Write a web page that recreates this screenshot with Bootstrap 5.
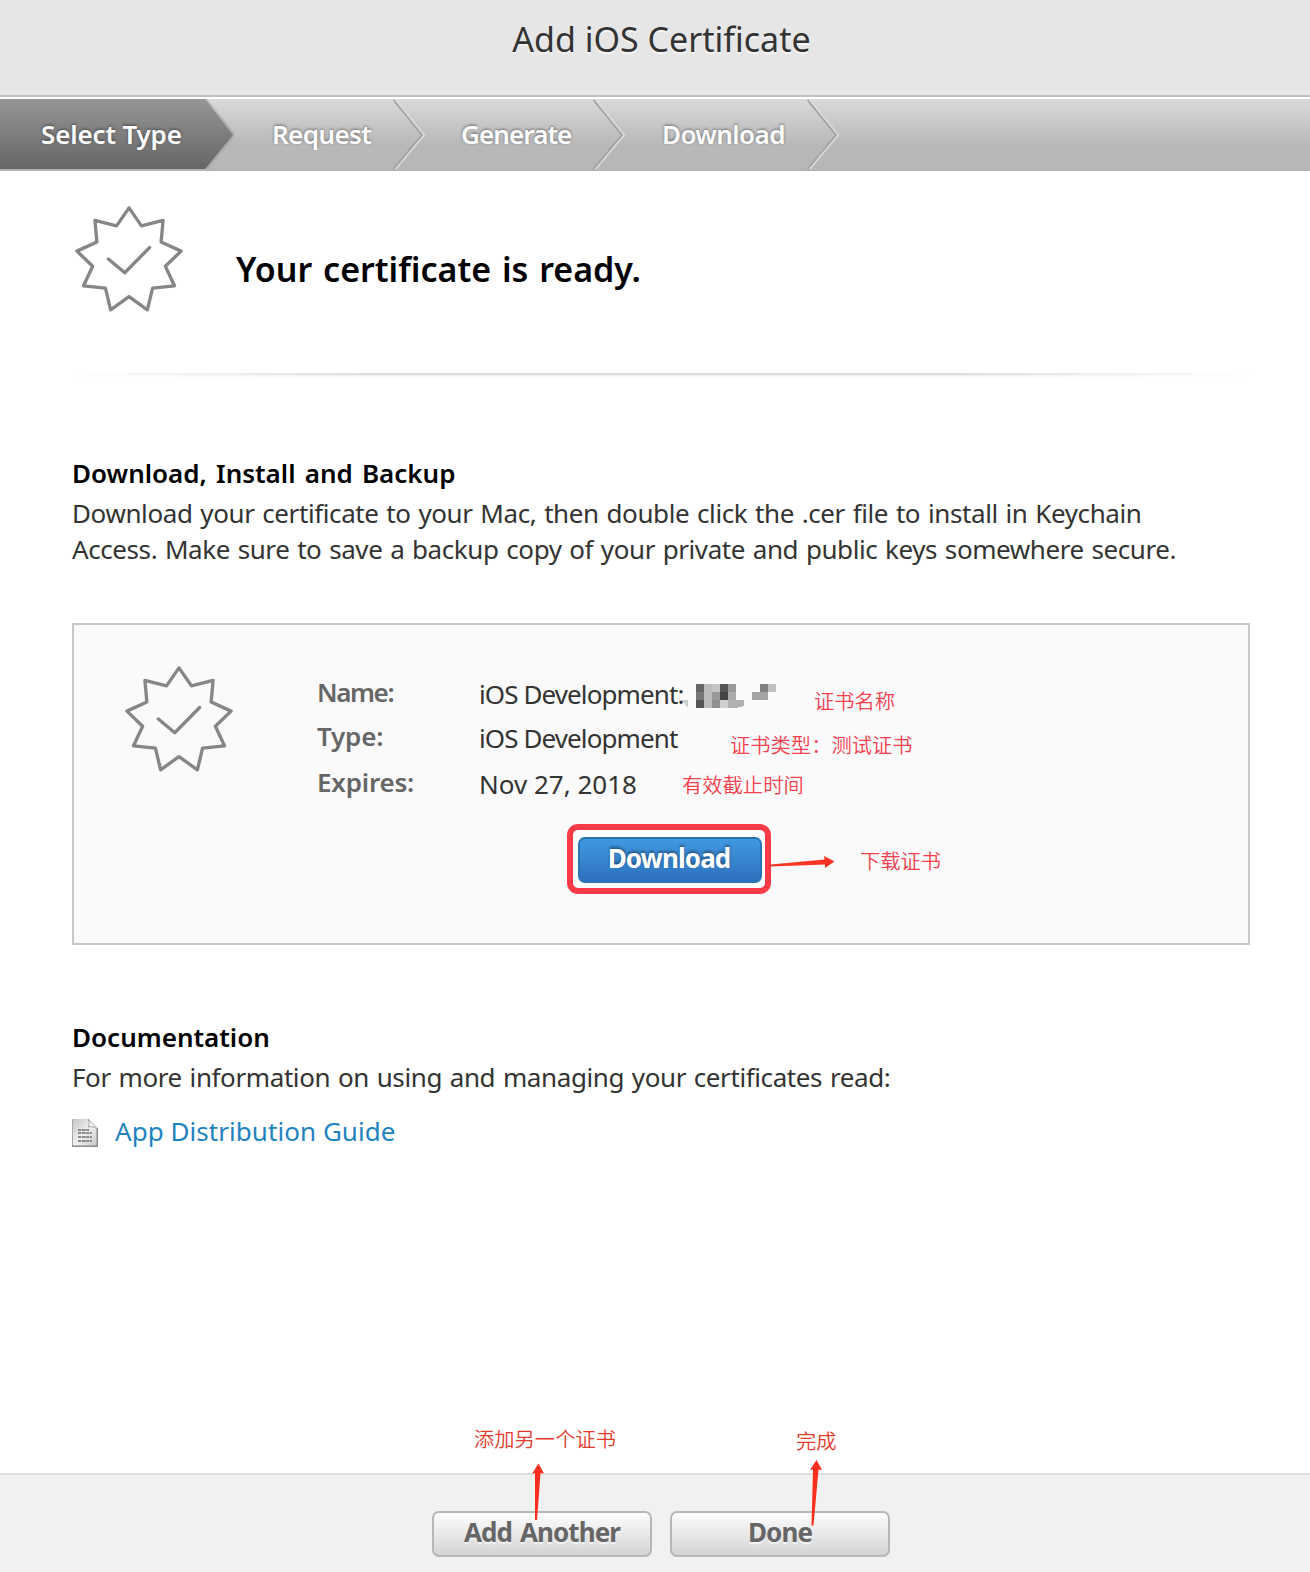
<!DOCTYPE html>
<html lang="en">
<head>
<meta charset="utf-8">
<meta name="viewport" content="width=device-width, initial-scale=1">
<title>Add iOS Certificate</title>
<link href="https://cdn.jsdelivr.net/npm/bootstrap@5.3.0/dist/css/bootstrap.min.css" rel="stylesheet">
<style>
body{font-family:"Noto Sans","Noto Sans CJK SC",sans-serif;font-size:26px;line-height:36px;color:#333;background:#fff;min-height:1572px}
.title-bar{height:97px;background:#e6e6e6;border-bottom:2px solid #c0c0c0;padding-top:15px}
.title-bar h1{font-size:34px;line-height:48px;font-weight:400;color:#333;text-shadow:0 2px 0 #f4f4f4;padding-left:13px}
.step-bar{height:72px;margin-top:2px;background:linear-gradient(#dadada,#b8b8b8 65%,#b7b7b7);color:#fff;font-weight:600;line-height:70px;white-space:nowrap;text-shadow:0 -1px 3px rgba(0,0,0,.45);border-bottom:2px solid #b3b3b3}
.step-item{height:70px;letter-spacing:-.6px}
.step-on{width:205px;padding-left:41px;letter-spacing:-.15px;background:linear-gradient(#969696,#666)}
.step-2{width:159px;padding-left:38px}
.step-3{width:168px;padding-left:36px;letter-spacing:-.9px}
.step-4{width:182px;padding-left:37px}
.ready{height:202px;padding:32px 0 0 1px}
.ready h2{font-size:34px;line-height:48px;font-weight:600;color:#000;margin:42px 0 0 51px;word-spacing:2px}
.seal-icon{width:112px;height:112px;flex:none}
.wrap-main{padding:0 60px 0 72px}
.fade-rule{height:6px;background:linear-gradient(90deg,#fff,transparent 25%,transparent 75%,#fff),linear-gradient(#d9d9d9,#e4e4e4 33%,#f6f6f6 50%,#fff)}
.sec-intro{padding-top:76px}
.sec-docs{padding-top:74px}
.sec-head{font-size:26px;line-height:36px;font-weight:600;color:#000;margin-bottom:4px;word-spacing:2.4px}
.body-text{letter-spacing:-.4px;word-spacing:1.4px;margin:0;white-space:nowrap}
.line-tight{letter-spacing:-.42px}
.cert-panel{height:322px;border:2px solid #c8c8c8;background:#fafafa;margin-top:56px;padding:42px 0 0 51px}
.cert-row{height:157px}
.cert-row .seal-icon{margin:-4px 0 0 -2px}
.facts{grid-template-columns:162px 1fr;grid-template-rows:44px 46px 44px;margin-left:82px;padding-top:7px}
.facts dt{font-weight:600;color:#666;letter-spacing:-.2px}
.facts dt:first-child{letter-spacing:-1.4px}
.facts dd{margin:0;padding-top:2px;white-space:nowrap}
.fact-tight{letter-spacing:-.9px}
.note-cn{font-family:"Noto Sans CJK SC",sans-serif;font-weight:350;font-size:20.3px;line-height:28px;color:#f3404e}
.note-dark{color:#e33b2c}
.btn-frame{width:204px;height:70px;border:6px solid #fb3a48;border-radius:11px;padding:7px 3px 5px 5px;background:#fbfdff}
.btn-blue,.btn-blue:hover{height:46px;border:2px solid #2b74b5;border-top-color:#2474a8;border-radius:7px;background:linear-gradient(#4199e1,#2c70bd);color:#fff;font-size:26px;font-weight:700;line-height:38px;padding:0 2px 4px 0;letter-spacing:-.9px;text-shadow:0 -2px 3px rgba(0,0,0,.4)}
.guide-link{color:#1f83c0;letter-spacing:.05px;margin-left:15px}
.foot-bar{height:99px;background:#f1f1f1;border-top:2px solid #e1e1e1;padding:36px 0 0 11px;gap:18px}
.btn-grey,.btn-grey:hover{width:220px;height:46px;border:2px solid #b7b7b7;border-radius:7px;background:linear-gradient(#fdfdfd,#d4d4d4);color:#666;font-size:26px;font-weight:700;line-height:38px;padding:0 0 4px 1px;letter-spacing:-.9px;word-spacing:2px;text-shadow:0 2px 1px #f4f4f4}
.foot-notes{left:0;top:-61px;width:1310px;height:125px;pointer-events:none}
</style>
</head>
<body class="d-flex flex-column">
<svg class="d-none">
  <symbol id="seal" viewBox="-1 -1 114 114">
    <path d="M56 4 68.7 22.3 90.7 16.7 88.7 38.7 109 48 93 63.3 102.3 83.3 80 85.7 74.7 107.7 56 94.3 37.3 107.7 32 85.7 9.7 83.3 19 63.3 3 48 23.3 38.7 21.3 16.7 43.3 22.3ZM35 56 51.7 70 77 44.3" fill="none" stroke="#868686" stroke-width="3.4" stroke-linejoin="round" stroke-linecap="round"/>
  </symbol>
  <symbol id="chev" viewBox="0 0 32 70">
    <path d="M2.500 1 31 36 2.500 70" fill="none" stroke="#dcdcdc" stroke-width="2"/>
    <path d="M.500 1 29 36 .500 70" fill="none" stroke="#a2a2a2" stroke-width="1.800"/>
  </symbol>
</svg>

<header class="title-bar text-center"><h1 class="m-0">Add iOS Certificate</h1></header>
<nav class="step-bar d-flex" aria-label="Progress">
  <div class="step-item step-on">Select Type</div>
  <svg width="29" height="70"><defs><linearGradient id="dk" x2="0" y2="1"><stop stop-color="#969696"/><stop offset="1" stop-color="#666"/></linearGradient></defs><path d="M0 0 29 36 1 70" fill="none" stroke="#999" stroke-opacity=".5" stroke-width="3"/><path d="M0 0 28 36 0 70Z" fill="url(#dk)"/></svg>
  <div class="step-item step-2">Request</div>
  <svg width="32" height="70"><use href="#chev"/></svg>
  <div class="step-item step-3">Generate</div>
  <svg width="32" height="70"><use href="#chev"/></svg>
  <div class="step-item step-4">Download</div>
  <svg width="32" height="70"><use href="#chev"/></svg>
</nav>

<main class="wrap-main flex-grow-1">
  <div class="ready d-flex align-items-start">
    <svg class="seal-icon"><use href="#seal"/></svg>
    <h2>Your certificate is ready.</h2>
  </div>
  <div class="fade-rule"></div>

  <section class="sec-intro">
    <h3 class="sec-head">Download, Install and Backup</h3>
    <p class="body-text">Download your certificate to your Mac, then double click the .cer file to install in Keychain<br><span class="line-tight">Access. Make sure to save a backup copy of your private and public keys somewhere secure.</span></p>

    <div class="cert-panel">
      <div class="cert-row d-flex align-items-start">
        <svg class="seal-icon"><use href="#seal"/></svg>
        <dl class="facts d-grid flex-grow-1 mb-0">
          <dt>Name:</dt>
          <dd class="d-flex align-items-start"><span class="fact-tight" style="width:206px">iOS Development:</span>
            <svg width="94" height="26" style="margin:8px 0 0 -3px" shape-rendering="crispEdges">
              <path d="M0 16h6v8z" fill="#ccc"/>
              <path d="M14 0h8v8h-8z" fill="#666"/><path d="M22 0h8v8h-8z" fill="#bbb"/><path d="M30 0h8v8h-8z" fill="#c4c4c4"/><path d="M38 0h8v8h-8z" fill="#555"/><path d="M46 0h8v8h-8z" fill="#999"/>
              <path d="M14 8h8v8h-8z" fill="#777"/><path d="M22 8h8v16h-8z" fill="#bbb"/><path d="M30 8h8v8h-8z" fill="#999"/><path d="M38 8h8v8h-8z" fill="#444"/><path d="M46 8h8v8h-8z" fill="#aaa"/>
              <path d="M14 16h8v8h-8z" fill="#555"/><path d="M30 16h8v8h-8z" fill="#909090"/><path d="M38 16h8v8h-8z" fill="#d0d0d0"/><path d="M46 16h16v6l-8 2h-8z" fill="#b0b0b0"/>
              <path d="M78 0h8v8h-8z" fill="#808080"/><path d="M86 0h8v8h-8z" fill="#c0c0c0"/><path d="M70 8h16v8h-16z" fill="#a5a5a5"/>
            </svg>
            <span class="note-cn" style="margin:10px 0 0 38px">证书名称</span></dd>
          <dt>Type:</dt>
          <dd class="d-flex align-items-start"><span class="fact-tight" style="width:251px">iOS Development</span><span class="note-cn" style="margin-top:10px">证书类型：测试证书</span></dd>
          <dt>Expires:</dt>
          <dd class="d-flex align-items-start"><span style="width:203px">Nov 27, 2018</span><span class="note-cn" style="margin-top:4px">有效截止时间</span></dd>
        </dl>
      </div>
      <div class="d-flex align-items-start" style="margin-left:442px">
        <div class="btn-frame flex-shrink-0"><button class="btn btn-blue w-100 d-block">Download</button></div>
        <svg width="66" height="20" style="margin-top:27px"><path d="M0 13.500 53.500 8.500 53 5 63.500 10.500 54 17 54 13.500 0 15.500Z" fill="#fa3423"/></svg>
        <span class="note-cn" style="margin:22px 0 0 23px">下载证书</span>
      </div>
    </div>
  </section>

  <section class="sec-docs">
    <h3 class="sec-head">Documentation</h3>
    <p class="body-text">For more information on using and managing your certificates read:</p>
    <div class="d-flex align-items-center" style="margin-top:18px">
      <svg width="28" height="29" class="mt-1"><defs><linearGradient id="pg" x2="1" y2="1"><stop stop-color="#c4c4c4"/><stop offset=".5" stop-color="#f0f0f0"/><stop offset="1" stop-color="#c4c4c4"/></linearGradient></defs>
        <path d="M0 0h17l9 9v19H0z" fill="url(#pg)"/><path d="M.500 0v27.500" stroke="#aaa"/><path d="M0 27.300h25.300V9" fill="none" stroke="#8c8c8c" stroke-width="1.500"/><path d="M16 0c1.500 3 1.500 5 0 8 3-1 6 0 9.500 2z" fill="#f6f6f6" stroke="#999" stroke-width=".8"/>
        <path d="M6 11h12M6 14h14M6 18h14M6 22h14" stroke="#8a8a8a" stroke-width="2" stroke-dasharray="3 .7 4 .5"/></svg>
      <a href="#" class="guide-link text-decoration-none">App Distribution Guide</a>
    </div>
  </section>
</main>

<footer class="foot-bar d-flex justify-content-center position-relative">
  <button class="btn btn-grey">Add Another</button>
  <button class="btn btn-grey">Done</button>
  <div class="foot-notes position-absolute">
    <span class="note-cn note-dark position-absolute" style="left:474px;top:10px">添加另一个证书</span>
    <span class="note-cn note-dark position-absolute" style="left:796px;top:12px">完成</span>
    <svg width="1310" height="125" class="d-block position-relative"><path d="M538.500 49.500 544 59.500 540.500 59 537 106 535 106 535 59 532 60ZM816.500 46 822 56 818.500 55.500 813.500 111.500 811.500 111.500 813 55.500 810 56Z" fill="#fa2e1d"/></svg>
  </div>
</footer>
<script src="https://cdn.jsdelivr.net/npm/bootstrap@5.3.0/dist/js/bootstrap.bundle.min.js"></script>
</body>
</html>
